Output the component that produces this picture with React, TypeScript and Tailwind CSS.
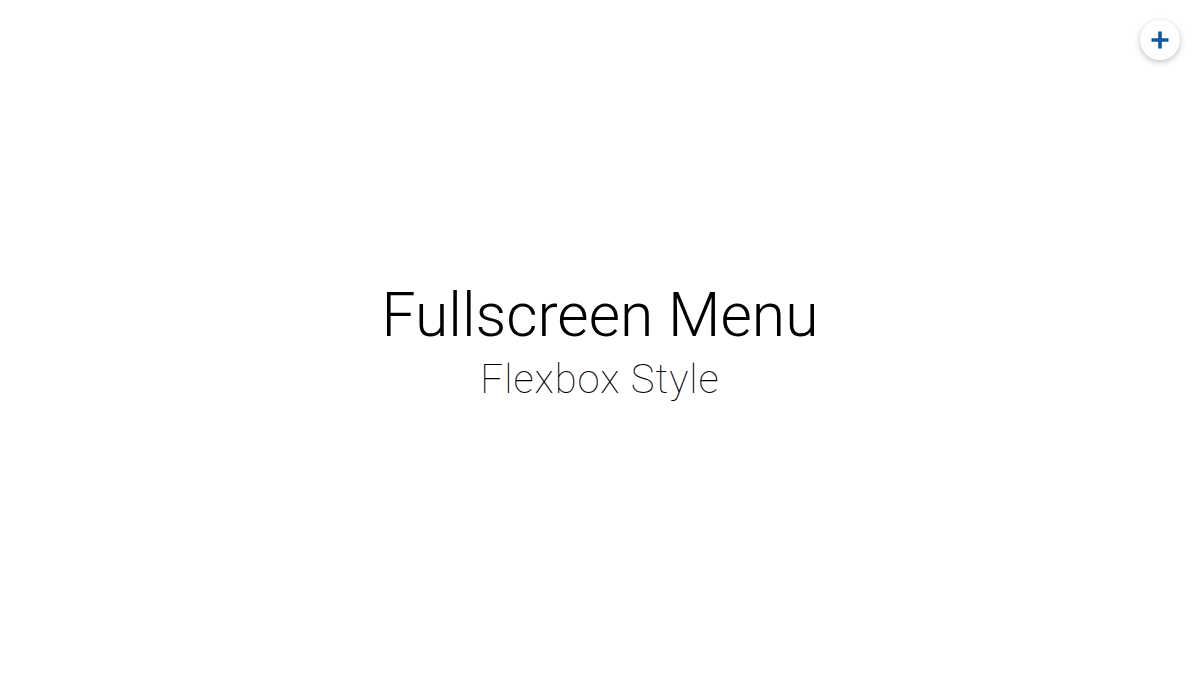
export default function App() {
  return (
    <div
      className="relative flex h-screen w-full flex-col items-center justify-center bg-white text-black"
      style={{ fontFamily: 'Roboto, "Liberation Sans", sans-serif' }}
    >
      {/* Menu toggle */}
      <button className="absolute right-[20px] top-[20px] flex h-[40px] w-[40px] items-center justify-center rounded-full bg-white shadow-[0_2px_6px_rgba(0,0,0,0.25)]">
        <svg width="18" height="18" viewBox="0 0 18 18">
          <path d="M9 0.5v17M0.5 9h17" stroke="#0f5aa6" strokeWidth="3.6" />
        </svg>
      </button>

      <h1 className="mt-[3px] text-[60.6px] font-light leading-[60px]">Fullscreen Menu</h1>
      <h2 className="mt-[14px] text-[40px] font-thin leading-[40px] tracking-[1px]">Flexbox Style</h2>
    </div>
  );
}
